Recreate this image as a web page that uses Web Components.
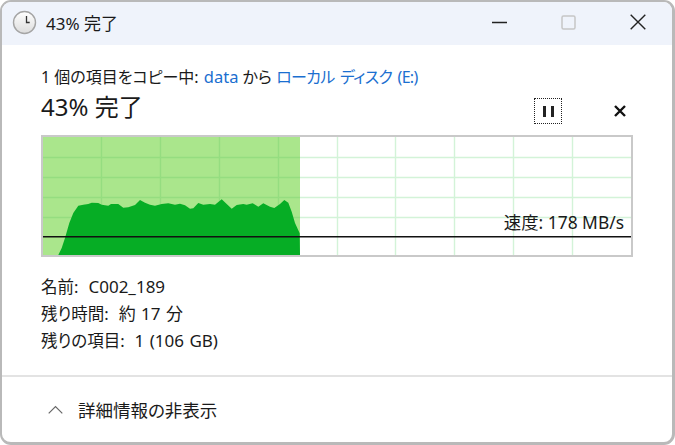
<!DOCTYPE html>
<html lang="ja"><head><meta charset="utf-8"><title>43% 完了</title>
<style>
html,body{margin:0;padding:0;background:#fff;width:675px;height:445px;overflow:hidden}
body{font-family:"Noto Sans","Noto Sans CJK JP",sans-serif;color:#1a1a1a}
</style></head><body>
<copy-window>
  <title-bar slot="title">43% 完了</title-bar>
  <copy-header></copy-header>
  <speed-chart speed="速度: 178 MB/s"></speed-chart>
  <detail-list>
    <detail-row label="名前:" value="C002_189"></detail-row>
    <detail-row label="残り時間:" value="約 17 分"></detail-row>
    <detail-row label="残りの項目:" value="1 (106 GB)"></detail-row>
  </detail-list>
  <details-footer slot="footer">詳細情報の非表示</details-footer>
</copy-window>
<script>
function def(name,html,init){
  customElements.define(name,class extends HTMLElement{
    constructor(){super();this.attachShadow({mode:"open"}).innerHTML=html;}
    connectedCallback(){ if(init)init(this,this.shadowRoot); }
  });
}
const FONT='"Noto Sans","Noto Sans CJK JP",sans-serif';
def("copy-window",`<style>
:host{display:flex;flex-direction:column;box-sizing:border-box;width:675px;height:445px;border:2px solid #b9b9b9;border-right-width:3px;border-bottom-width:3px;border-radius:11px;background:#fff;overflow:hidden;font-family:${FONT};font-feature-settings:"palt"}
.main{flex:1;display:flex;flex-direction:column;padding:0 40px 0 39px;min-height:0}
</style><slot name="title"></slot><div class="main"><slot></slot></div><slot name="footer"></slot>`);

def("title-bar",`<style>
:host{display:flex;align-items:center;box-sizing:border-box;height:43px;padding-bottom:3px;flex:none;background:#eff3fb;font-size:17px;color:#1a1a1a}
svg{display:block;flex:none}
.ico{margin-left:10px;margin-right:9px}
.t{flex:1;white-space:nowrap}
.btns{display:flex;margin-right:26px;gap:54px;align-items:center}
</style>
<svg class="ico" width="25" height="25" viewBox="0 0 25 25"><defs><linearGradient id="g" x1="0" y1="0" x2="0" y2="1"><stop offset="0" stop-color="#fff"/><stop offset="1" stop-color="#dcdcdc"/></linearGradient></defs>
<circle cx="12.5" cy="12.5" r="11" fill="url(#g)" stroke="#a5a5a5" stroke-width="1.4"/>
<path d="M14.5 6v6.5h3.2" fill="none" stroke="#333" stroke-width="1.3"/></svg>
<span class="t"><slot></slot></span>
<span class="btns">
<svg width="15" height="15" viewBox="0 0 15 15"><path d="M0 7.5h15" stroke="#222" stroke-width="1.4"/></svg>
<svg width="15" height="15" viewBox="0 0 15 15"><rect x="1" y="1" width="13" height="13" rx="1.5" fill="none" stroke="#c6c6c6" stroke-width="1.5"/></svg>
<svg width="16" height="16" viewBox="0 0 16 16"><path d="M.7.7l14.6 14.6M15.3.7L.7 15.3" stroke="#222" stroke-width="1.4" fill="none"/></svg>
</span>`);

def("copy-header",`<style>
:host{display:block;flex:none;padding-top:21px;height:90px;box-sizing:border-box;font-size:16px;color:#1a1a1a}
.l1{height:22px;line-height:22px;white-space:nowrap}
a{color:#1b6fd0;text-decoration:none}
.data{font-size:16.5px;margin-left:1px}
.disk{letter-spacing:-.7px;word-spacing:2px}
.row{display:flex;align-items:center;height:32px;margin-top:3px}
.big{flex:1;font-size:24px;white-space:nowrap;line-height:32px}
.pause{box-sizing:border-box;width:28px;height:26px;border:1px dotted #222;display:flex;align-items:center;justify-content:center;gap:5px;margin-right:52px;margin-top:8px}
.pause i{display:block;width:3px;height:11px;background:#222}
svg{display:block;margin-right:6px;margin-top:8px}
</style>
<div class="l1">1 個の項目をコピー中: <a class="data">data</a> から <a class="disk">ローカル ディスク (E:)</a></div>
<div class="row"><span class="big">43% 完了</span>
<span class="pause"><i></i><i></i></span>
<svg width="12" height="12" viewBox="0 0 12 12"><path d="M1 1l10 10M11 1L1 11" stroke="#111" stroke-width="2.4"/></svg></div>`);

const outline="55,255 58.3,255 61.7,248 65,238 69.3,223 73.3,213 78.3,205.7 83.3,204.7 88.3,204 91.7,202.7 98.3,203 101.7,204.7 108.3,205.7 111,204 118.3,204 123.3,207.7 128.3,207.3 135,205 140,200 145,202.7 150,204.7 155,205.7 161.7,204 168.3,203.3 175,204.7 180,203.7 185,205.3 190,208.7 193.3,208.3 198.3,203 203.3,204.7 210,204 215,204.7 221.7,199.3 226.7,204 231.7,208.7 236.7,205 243.3,204 246.7,204.7 252.7,203.3 258.3,206.7 263.3,203.3 270,206.7 274.3,208 280,204 284.3,200 288.3,202.7 291.7,211.7 295,223 299.7,233.3 300,255";
const pts=outline.split(" ").map(p=>{const [x,y]=p.split(",").map(Number);return (x-43)+","+(y-137)}).join(" ");
const vs=[101,160,219,278,337,395,454,513,572].map(x=>x-43+.5);
const hs=[157,177,197,217].map(y=>y-137+.5);
const grid=(c)=>vs.map(x=>`<path d="M${x} 0V118" stroke="${c}" stroke-width="1.4"/>`).join("")+hs.map(y=>`<path d="M0 ${y}H588" stroke="${c}" stroke-width="1.4"/>`).join("");
def("speed-chart",`<style>
:host{display:block;position:relative;flex:none;box-sizing:border-box;width:592px;height:122px;border:2px solid #c9c9c9;background:#fff}
svg{display:block}
.speed{position:absolute;right:7px;top:74px;font-size:17.4px;line-height:22px;color:#1a1a1a;white-space:nowrap}
</style>
<svg width="588" height="118" viewBox="0 0 588 118">
${grid("#d3f3d8")}
<rect x="0" y="0" width="257" height="118" fill="#aae68c"/>
<svg x="0" y="0" width="257" height="118">${grid("#95dd80")}</svg>
<polygon points="${pts}" fill="#06ad25"/>
<rect x="0" y="99" width="588" height="1.5" fill="#111"/>
</svg><span class="speed"></span>`,(el,root)=>{root.querySelector(".speed").textContent=el.getAttribute("speed");});

def("detail-list",`<style>
:host{display:block;flex:none;padding-top:16px;color:#1a1a1a}
</style><slot></slot>`);

def("detail-row",`<style>
:host{display:flex;height:27px;line-height:27px;font-size:16.5px;white-space:nowrap}
.k{margin-right:10px}
.v{font-size:17px;word-spacing:1px}
</style><span class="k"></span><span class="v"></span>`,(el,root)=>{
  root.querySelector(".k").textContent=el.getAttribute("label");
  root.querySelector(".v").textContent=el.getAttribute("value");
});

def("details-footer",`<style>
:host{display:flex;align-items:center;flex:none;box-sizing:border-box;height:67px;border-top:2px solid #e3e3e3;padding:0 0 0 46px;font-size:17.5px;color:#1a1a1a;white-space:nowrap}
svg{display:block;margin-right:15px}
</style>
<svg width="15" height="9" viewBox="0 0 15 9"><path d="M.7 8.3L7.5 1.5l6.8 6.8" fill="none" stroke="#666" stroke-width="1.2"/></svg><slot></slot>`);
</script>
</body></html>
